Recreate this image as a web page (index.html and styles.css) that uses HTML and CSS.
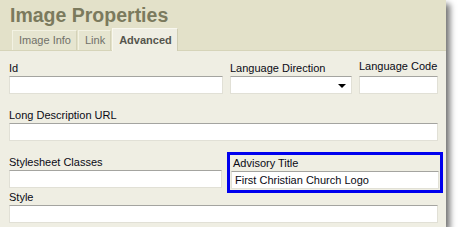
FILE: index.html
```html
<!DOCTYPE html>
<html>
<head>
<meta charset="utf-8">
<link rel="stylesheet" href="styles.css">
</head>
<body>
<div class="dialog">
  <div class="header">
    <div class="title">Image Properties</div>
    <div class="tabs">
      <div class="tab">Image Info</div>
      <div class="tab">Link</div>
      <div class="tab active">Advanced</div>
    </div>
  </div>
  <div class="content">
    <div class="row">
      <div class="field f-id">
        <div class="label">Id</div>
        <div class="input"></div>
      </div>
      <div class="field f-dir">
        <div class="label">Language Direction</div>
        <div class="input select"><span class="arrow"></span></div>
      </div>
      <div class="field f-code">
        <div class="label up">Language Code</div>
        <div class="input"></div>
      </div>
    </div>
    <div class="row r2">
      <div class="field f-full">
        <div class="label">Long Description URL</div>
        <div class="input"></div>
      </div>
    </div>
    <div class="row r3">
      <div class="field f-css">
        <div class="label">Stylesheet Classes</div>
        <div class="input"></div>
      </div>
      <div class="field highlight">
        <div class="label">Advisory Title</div>
        <div class="input">First Christian Church Logo</div>
      </div>
    </div>
    <div class="row r4">
      <div class="field f-full">
        <div class="label">Style</div>
        <div class="input"></div>
      </div>
    </div>
  </div>
</div>
</body>
</html>
```

FILE: styles.css
```css
html, body {
  margin: 0;
  padding: 0;
  background: #ffffff;
}
body {
  font-family: "Liberation Sans", Arial, sans-serif;
  font-size: 11px;
  color: #0a0a14;
}
.dialog {
  width: 446px;
  height: 227px;
  background: #efeee3;
  box-shadow: 4px 4px 6px rgba(0, 0, 0, 0.55);
}
.header {
  background: #e3e1c9;
  border-bottom: 1px solid #d6d4b9;
  box-sizing: border-box;
  height: 51px;
}
.title {
  padding: 4px 0 0 10px;
  height: 26px;
  box-sizing: border-box;
  line-height: 22px;
  font-size: 19.5px;
  font-weight: bold;
  color: #7b7a5d;
}
.tabs {
  display: flex;
  padding: 4px 0 0 12px;
  align-items: flex-end;
}
.tab {
  height: 20px;
  box-sizing: border-box;
  padding: 0 5px 0 6px;
  line-height: 19px;
  color: #707069;
  background: #e6e5d0;
  border-left: 1px solid #f3f2e3;
  border-top: 1px solid #f3f2e3;
  border-right: 1px solid #d4d2b8;
  margin-right: 1px;
}
.tab.active {
  height: 23px;
  margin-top: -2px;
  margin-bottom: -1px;
  background: #efeee3;
  font-weight: bold;
  color: #55554d;
  padding: 2px 5px 0 6px;
  border-left: 1px solid #f8f7ee;
  border-top: 1px solid #f8f7ee;
  border-right: 1px solid #cfcdb3;
}
.content {
  padding: 10px 8px 0 9px;
}
.row {
  display: flex;
  align-items: flex-start;
}
.field {
  flex-shrink: 0;
}
.label {
  line-height: 14px;
  height: 14px;
  margin-bottom: 1px;
  white-space: nowrap;
}
.label.up {
  margin-top: -2px;
  margin-bottom: 3px;
}
.input {
  height: 18px;
  box-sizing: border-box;
  background: #fff;
  border: 1px solid #e1e0d6;
  border-top: 1px solid #a4a4a0;
  position: relative;
  padding-left: 3px;
  line-height: 16px;
  white-space: nowrap;
}
.f-id { width: 214px; margin-right: 7px; }
.f-dir { width: 122px; margin-right: 7px; }
.f-code { width: 79px; }
.f-full { width: 429px; }
.r2 { margin-top: 14px; }
.r3 { margin-top: 14px; }
.r4 { margin-top: 2px; }
.f-css { width: 213px; margin-right: 5px; }
.highlight {
  width: 216px;
  box-sizing: border-box;
  border: 3px solid #0000ee;
  padding: 1px;
  margin-top: -3px;
  margin-bottom: -5px;
}
.highlight .label { padding-left: 2px; }
.arrow {
  position: absolute;
  right: 5px;
  top: 7px;
  width: 0;
  height: 0;
  border-left: 4px solid transparent;
  border-right: 4px solid transparent;
  border-top: 4px solid #000;
}
```
